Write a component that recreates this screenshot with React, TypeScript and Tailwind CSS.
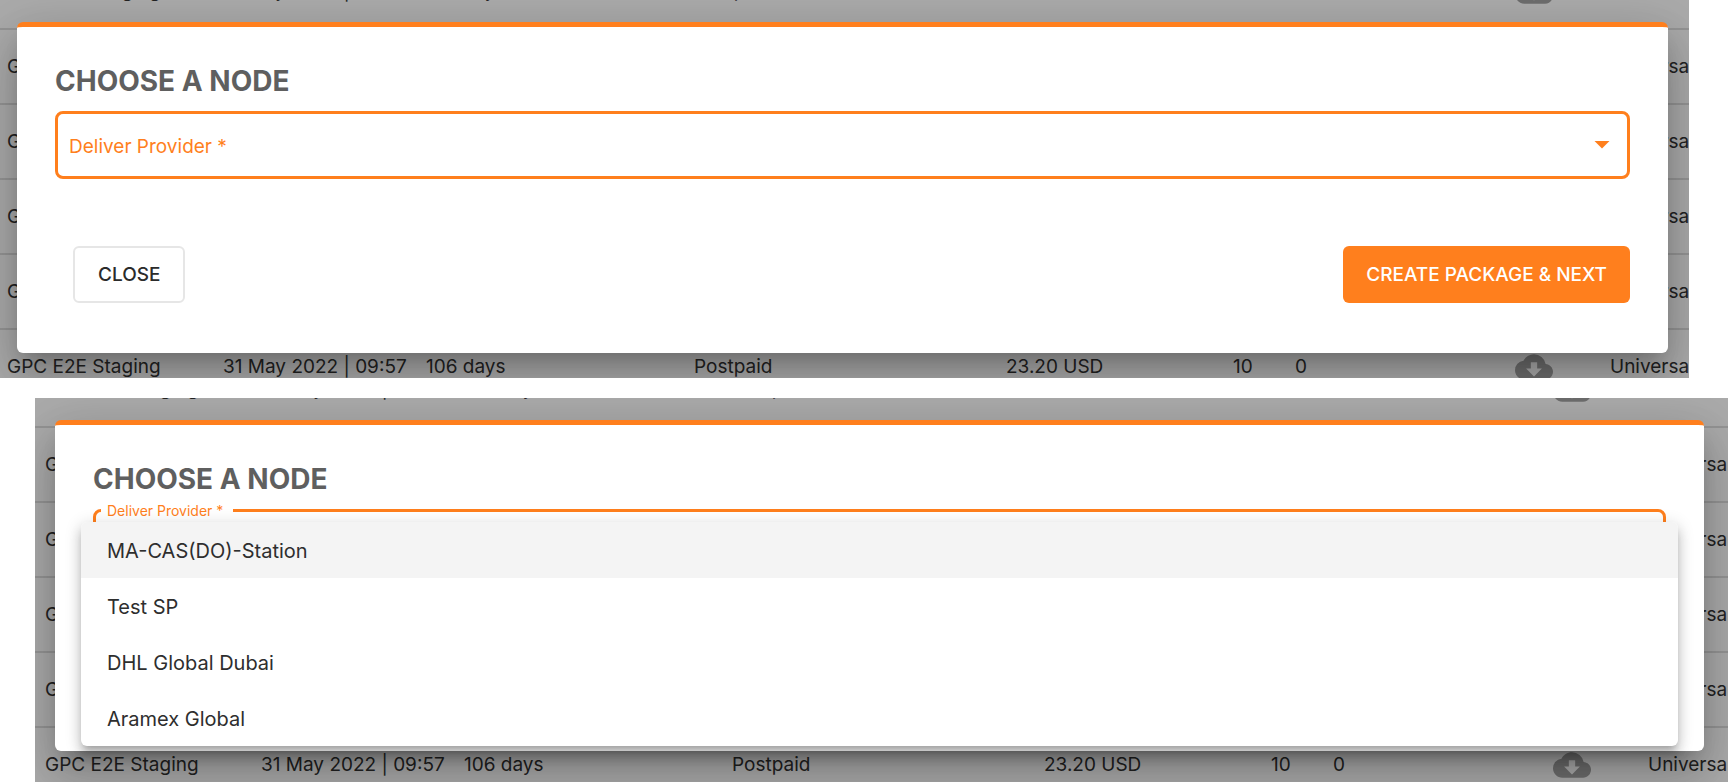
import React from "react";
import { MdCloudDownload, MdArrowDropDown } from "react-icons/md";

const providers = ["MA-CAS(DO)-Station", "Test SP", "DHL Global Dubai", "Aramex Global"];
const rows = [0, 1, 2, 3, 4, 5];

function ShipmentsTable({ inset }: { inset: string }) {
  return (
    <table className="-mt-[46px] w-[1740px] table-fixed border-collapse text-left text-[19px] leading-6 text-[#333333]">
      <colgroup>
        <col className={inset} />
        <col className="w-[203px]" />
        <col className="w-[268px]" />
        <col className="w-[312px]" />
        <col className="w-[227px]" />
        <col className="w-[62px]" />
        <col className="w-[220px]" />
        <col className="w-[95px]" />
        <col />
      </colgroup>
      <tbody>
        {rows.map((row) => (
          <tr key={row} className="h-[75px] border-b-2 border-[#dedede] whitespace-nowrap">
            <td className="text-right">
              <span className="inline-block w-[216px] text-left">GPC E2E Staging</span>
            </td>
            <td>31 May 2022 | 09:57</td>
            <td>106 days</td>
            <td>Postpaid</td>
            <td>23.20 USD</td>
            <td>10</td>
            <td>0</td>
            <td>
              <MdCloudDownload className="size-[38px] text-[#a3a3a3]" />
            </td>
            <td>Universal</td>
          </tr>
        ))}
      </tbody>
    </table>
  );
}

function Screen({ inset, className, children }: { inset: string; className: string; children: React.ReactNode }) {
  return (
    <section className={`relative overflow-hidden bg-white ${className}`}>
      <div className="absolute inset-0 overflow-hidden">
        <ShipmentsTable inset={inset} />
      </div>
      <div className="absolute inset-0 bg-black/33" />
      {children}
    </section>
  );
}

function Dialog({ open, id }: { open?: boolean; id: string }) {
  return (
    <div
      role="dialog"
      aria-labelledby={`${id}-title`}
      className="relative rounded-md border-t-[5px] border-[#ff7f1d] bg-white px-[38px] pt-9 pb-[50px] shadow-[0_13px_18px_-8px_rgba(0,0,0,0.2),0_28px_45px_4px_rgba(0,0,0,0.14),0_11px_54px_9px_rgba(0,0,0,0.12)]"
    >
      <h2 id={`${id}-title`} className="text-[28px] leading-9 font-bold text-[#5f5f5f]">
        CHOOSE A NODE
      </h2>
      <div className="relative mt-3 text-[#ff7f1d]">
        <label
          htmlFor={id}
          className={
            open
              ? "absolute -top-2 left-2 bg-white pr-2.5 pl-1.5 text-sm leading-5"
              : "pointer-events-none absolute top-6 left-3.5 text-[19px] leading-6"
          }
        >
          Deliver Provider *
        </label>
        <select id={id} required defaultValue="" className="h-[68px] w-full appearance-none rounded-lg border-3 border-[#ff7f1d] bg-white px-3 text-[19px]">
          <option value="" />
          {providers.map((name) => (
            <option key={name}>{name}</option>
          ))}
        </select>
        <MdArrowDropDown className="pointer-events-none absolute top-[15px] right-[10px] size-9" />
      </div>
      <div className="mt-[67px] flex items-center justify-between pl-[18px] text-[19px] leading-6 font-medium">
        <button type="button" className="h-[57px] rounded-md border-2 border-[#e6e6e6] px-[23px] text-[#2b2b2b]">
          CLOSE
        </button>
        <button type="button" className="h-[57px] rounded-md bg-[#ff7f1d] px-[23px] text-white">
          CREATE PACKAGE &amp; NEXT
        </button>
      </div>
      {open && (
        <ul
          role="listbox"
          aria-label="Deliver Provider"
          className="absolute inset-x-[26px] top-[97px] overflow-hidden rounded-md bg-white text-[20px] leading-6 text-[#2e2e2e] shadow-[0_6px_6px_-3px_rgba(0,0,0,0.2),0_9px_12px_1px_rgba(0,0,0,0.14),0_3px_16px_2px_rgba(0,0,0,0.12)]"
        >
          {providers.map((name, i) => (
            <li key={name} role="option" aria-selected={i === 0} className="px-[26px] pt-[17px] pb-[15px] aria-selected:bg-[#f4f4f4]">
              {name}
            </li>
          ))}
        </ul>
      )}
    </div>
  );
}

export default function App() {
  return (
    <main className="flex flex-col gap-5 overflow-hidden bg-white font-['Inter',sans-serif]">
      <Screen className="mr-[39px] pt-[22px] pr-[21px] pb-[25px] pl-[17px]" inset="w-[223px]">
        <Dialog id="provider" />
      </Screen>
      <Screen className="ml-[35px] pt-[22px] pr-6 pb-[31px] pl-5" inset="w-[226px]">
        <Dialog id="provider-open" open />
      </Screen>
    </main>
  );
}
